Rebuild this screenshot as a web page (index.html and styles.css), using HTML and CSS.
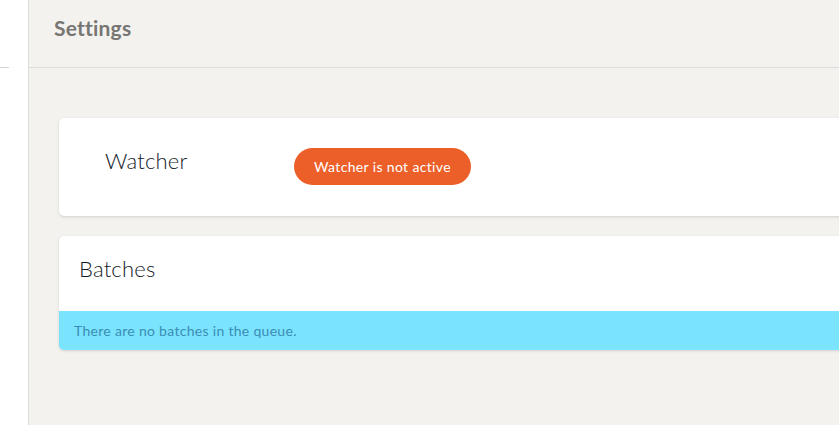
FILE: index.html
```html
<!DOCTYPE html>
<html>
<head>
<meta charset="utf-8">
<link rel="stylesheet" href="styles.css">
</head>
<body>
<div class="app">
  <aside class="sidebar"><div class="sidebar-top"></div></aside>
  <main class="main">
    <header class="header"><h1 class="title">Settings</h1></header>
    <div class="content">
      <section class="card watcher">
        <h2 class="card-title">Watcher</h2>
        <span class="badge">Watcher is not active</span>
      </section>
      <section class="card batches">
        <h2 class="card-title">Batches</h2>
        <div class="alert">There are no batches in the queue.</div>
      </section>
    </div>
  </main>
</div>
</body>
</html>
```

FILE: styles.css
```css
html, body {
  margin: 0;
  padding: 0;
  height: 100%;
  overflow: hidden;
}
body {
  font-family: Lato, "Open Sans", sans-serif;
  background: #ffffff;
}
.app {
  display: flex;
  height: 100%;
}
.sidebar {
  width: 28px;
  flex: 0 0 28px;
  background: #ffffff;
  border-right: 1px solid #dcdcdc;
}
.sidebar-top {
  width: 9px;
  height: 67px;
  border-bottom: 1px solid #d6d6d6;
}
.main {
  flex: 1;
  background: #f3f2ef;
  display: flex;
  flex-direction: column;
  min-width: 0;
}
.header {
  height: 67px;
  border-bottom: 1px solid #dcdcdc;
  display: flex;
  align-items: center;
  padding-left: 25px;
  box-sizing: border-box;
  flex: 0 0 68px;
}
.title {
  margin: 0;
  font-size: 21px;
  font-weight: 700;
  letter-spacing: 0.2px;
  color: #777673;
  position: relative;
  top: -6px;
}
.content {
  padding: 50px 0 0 30px;
  margin-right: -20px;
  display: flex;
  flex-direction: column;
  gap: 20px;
}
.card {
  background: #ffffff;
  border-radius: 5px;
  box-shadow: 0 1px 3px rgba(0, 0, 0, 0.14);
  overflow: hidden;
}
.card-title {
  margin: 0;
  font-size: 22px;
  font-weight: 300;
  letter-spacing: 0.2px;
  color: #141b29;
}
.watcher {
  height: 98px;
  box-sizing: border-box;
  display: flex;
  align-items: flex-start;
  padding: 29px 0 0 46px;
}
.watcher .card-title {
  width: 189px;
}
.badge {
  height: 37px;
  width: 177px;
  box-sizing: border-box;
  border-radius: 19px;
  background: #ec5f29;
  color: #ffffff;
  font-size: 14px;
  letter-spacing: 0.35px;
  display: flex;
  align-items: center;
  justify-content: center;
  position: relative;
  top: 1px;
}
.batches .card-title {
  padding: 19px 20px 0 20px;
  height: 55px;
  box-sizing: border-box;
}
.alert {
  margin-top: 20px;
  height: 39px;
  background: #7ae3fe;
  color: #3a8db4;
  font-size: 14px;
  letter-spacing: 0.3px;
  display: flex;
  align-items: center;
  padding-left: 15px;
}
```
